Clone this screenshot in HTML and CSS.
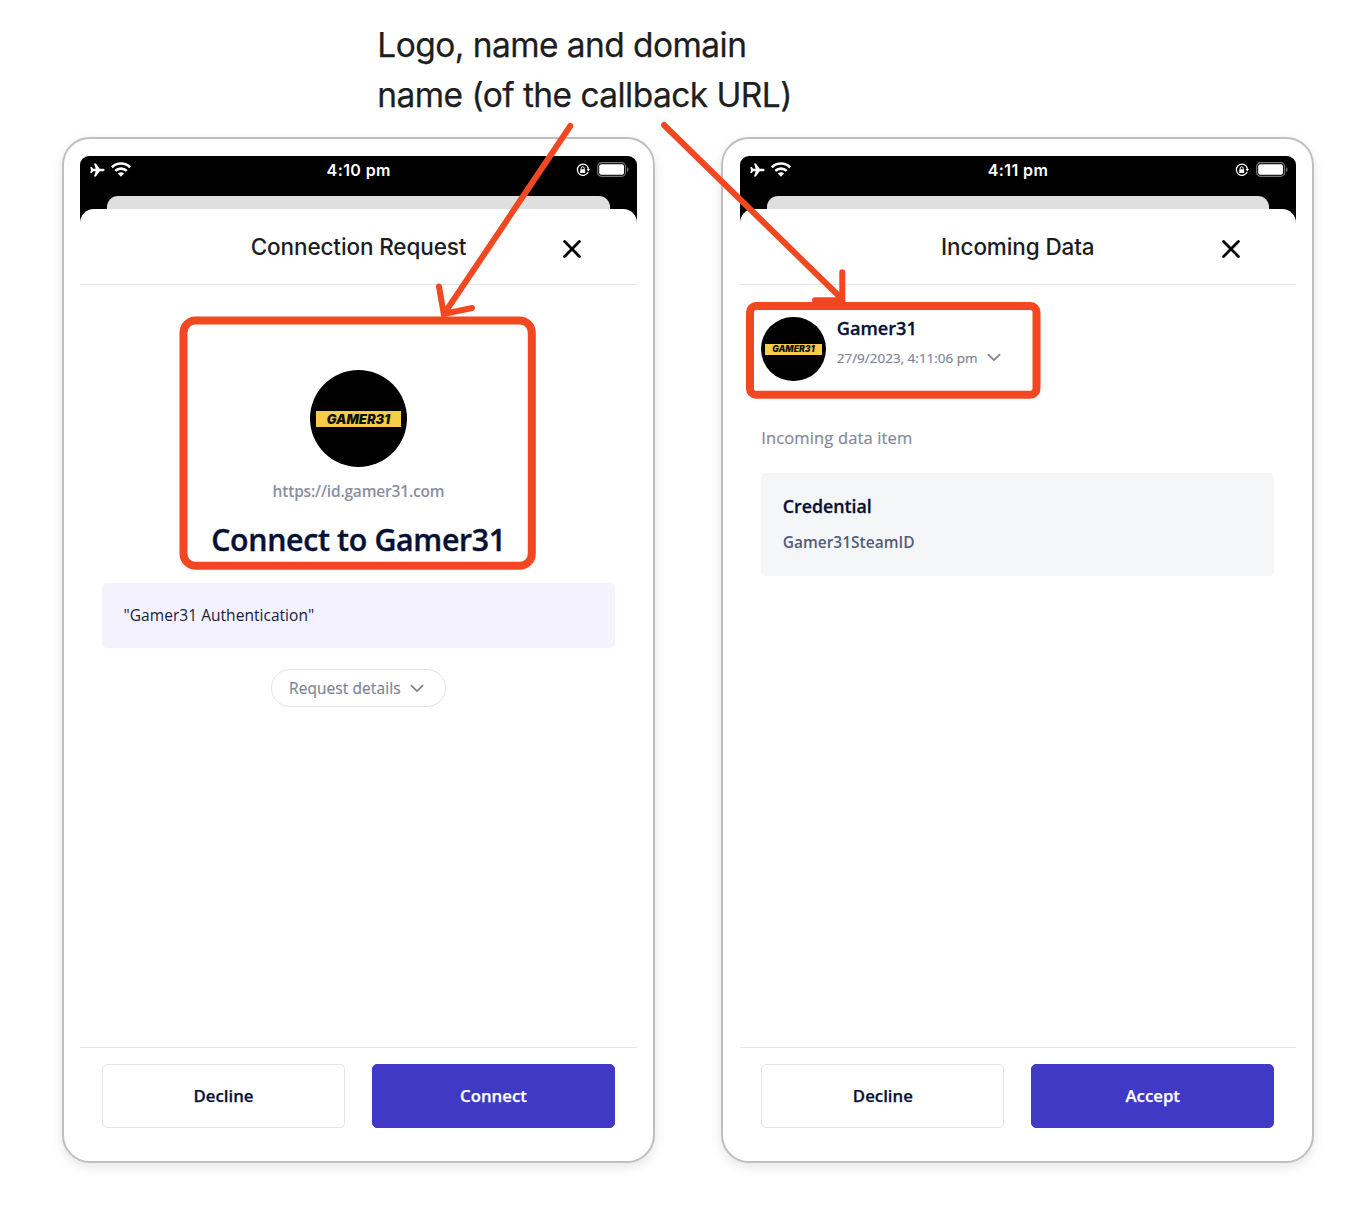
FILE: index.html
```html
<!DOCTYPE html>
<html lang="en">
<head>
<meta charset="utf-8">
<title>Connection and credential requests</title>
<link rel="stylesheet" href="styles.css">
</head>
<body>
<svg class="defs" width="0" height="0" aria-hidden="true">
  <symbol id="plane" viewBox="0 0 15 14"><path fill="#fff" d="M14.6 7c0-.8-.8-1.3-1.8-1.3H9.7L5.9.5H4l1.7 5.2H3.1L1.8 4H.3l.6 3-.6 3h1.5l1.3-1.7h2.6L4 13.5h1.9l3.8-5.2h3.1c1 0 1.8-.5 1.8-1.3z"/></symbol>
  <symbol id="wifi" viewBox="0 0 20 15"><g fill="none" stroke="#fff" stroke-width="2.7"><path d="M.9 5.2a13.1 13.1 0 0 1 18.2 0"/><path d="M4.3 8.9a8.2 8.2 0 0 1 11.4 0"/></g><path fill="#fff" d="M6.8 11.5a4.6 4.6 0 0 1 6.4 0L10 14.8z"/></symbol>
  <symbol id="lock" viewBox="0 0 14 14"><path d="M11.3 3.2A5.6 5.6 0 1 0 12.1 9" fill="none" stroke="#fff" stroke-width="1.3"/><path d="M11.1 3.2a5.6 5.6 0 0 1 1.3 3.1" fill="none" stroke="#fff" stroke-width="1.3"/><path d="M10.6 6h3.4l-1.7 2.5z" fill="#fff"/><rect x="4.2" y="6.3" width="5" height="3.8" rx=".6" fill="#fff"/><path d="M5.2 6.5V5.2a1.5 1.5 0 0 1 3 0v1.3" fill="none" stroke="#fff" stroke-width="1"/></symbol>
  <symbol id="battery" viewBox="0 0 32 15"><rect x=".7" y=".7" width="27.8" height="13.6" rx="3.8" fill="none" stroke="#777" stroke-width="1.2"/><rect x="2.2" y="2.2" width="24.8" height="10.6" rx="2" fill="#fff"/><path d="M30 5.2v4.6c2-.7 2-3.9 0-4.6z" fill="#777"/></symbol>
  <symbol id="close" viewBox="0 0 18 18"><path d="M1.6 1.6l14.8 14.8M16.4 1.6L1.6 16.4" fill="none" stroke="#000" stroke-width="2.8" stroke-linecap="round"/></symbol>
  <symbol id="chevron" viewBox="0 0 14 9"><path d="M1.4 1.6L7 7.2l5.6-5.6" fill="none" stroke="#7f8294" stroke-width="1.8" stroke-linecap="round" stroke-linejoin="round"/></symbol>
</svg>
<main class="board">
  <p class="caption">Logo, name and domain<br>name (of the callback URL)</p>
  <div class="phones">
    <section class="phone">
      <div class="screen">
        <div class="status">
          <span class="signal"><svg class="plane"><use href="#plane"/></svg><svg class="wifi"><use href="#wifi"/></svg></span>
          <span class="clock">4:10 pm</span>
          <span class="power"><svg class="lock"><use href="#lock"/></svg><svg class="battery"><use href="#battery"/></svg></span>
        </div>
        <div class="backdrop"><div class="behind"></div></div>
        <div class="sheet">
          <header class="head"><span>Connection Request</span><svg class="close"><use href="#close"/></svg></header>
          <div class="content centered">
            <div class="logo"><span class="band"><b>GAMER31</b></span></div>
            <p class="url">https://id.gamer31.com</p>
            <h1 class="title">Connect to Gamer31</h1>
            <div class="purpose">"Gamer31 Authentication"</div>
            <div class="details"><span>Request details</span><svg class="chevron"><use href="#chevron"/></svg></div>
          </div>
          <footer class="actions"><div class="btn">Decline</div><div class="btn primary">Connect</div></footer>
        </div>
      </div>
    </section>
    <section class="phone">
      <div class="screen">
        <div class="status">
          <span class="signal"><svg class="plane"><use href="#plane"/></svg><svg class="wifi"><use href="#wifi"/></svg></span>
          <span class="clock">4:11 pm</span>
          <span class="power"><svg class="lock"><use href="#lock"/></svg><svg class="battery"><use href="#battery"/></svg></span>
        </div>
        <div class="backdrop"><div class="behind"></div></div>
        <div class="sheet">
          <header class="head"><span>Incoming Data</span><svg class="close"><use href="#close"/></svg></header>
          <div class="content">
            <div class="sender">
              <div class="logo small"><span class="band"><b>GAMER31</b></span></div>
              <div class="who"><h2 class="name">Gamer31</h2><p class="date"><span>27/9/2023, 4:11:06 pm</span><svg class="chevron"><use href="#chevron"/></svg></p></div>
            </div>
            <p class="label">Incoming data item</p>
            <div class="credential"><h3>Credential</h3><p>Gamer31SteamID</p></div>
          </div>
          <footer class="actions"><div class="btn">Decline</div><div class="btn primary">Accept</div></footer>
        </div>
      </div>
    </section>
  </div>
  <svg class="marks" viewBox="0 0 1368 1212" fill="none" stroke="#f24822">
    <rect x="183.5" y="320.5" width="348.3" height="245.3" rx="12" stroke-width="8"/>
    <rect x="750" y="306" width="286.5" height="88.7" rx="6" stroke-width="8"/>
    <g stroke-width="6" stroke-linecap="round">
      <path d="M570.3 126L444 314M439 286.5L443.8 314L472 308"/>
      <path d="M664 125L842 299M842.3 272.3V300.3H815"/>
    </g>
  </svg>
</main>
</body>
</html>
```
FILE: styles.css
```css
* { box-sizing: border-box; }
body, p, h1, h2, h3 { margin: 0; }
body { background: #fff; font-family: "Open Sans", "Noto Sans", sans-serif; color: #071135; }
svg { display: block; flex: none; }
.defs { position: absolute; }
.board { position: relative; width: 1368px; height: 1212px; overflow: hidden; padding: 20px 0 0 62px; }
.caption { height: 117px; padding-left: 315.3px; font: 400 33.5px/50px Inter, sans-serif; letter-spacing: -.56px; color: #1e1e1e; -webkit-text-stroke: .25px #1e1e1e; white-space: nowrap; }
.phones { display: flex; gap: 66.3px; }
.phone { width: 593px; height: 1026px; border: 2px solid #bfbfbf; border-radius: 28px; padding: 16.6px 16.3px; background: #fff; box-shadow: 0 4px 12px rgba(0,0,0,.1); }
.screen { width: 556.4px; height: 989px; display: flex; flex-direction: column; border-radius: 9px 9px 0 0; background: linear-gradient(#000 66px, #fff 76px); }
.status { height: 40.4px; display: grid; grid-template-columns: 1fr auto 1fr; align-items: start; padding: 0 8px 0 10px; }
.signal, .power { display: flex; align-items: center; height: 27.5px; }
.signal { gap: 6px; }
.power { justify-content: flex-end; gap: 7px; }
.plane { width: 15px; height: 14px; margin-top: 1px; }
.wifi { width: 20px; height: 15px; }
.lock { width: 14px; height: 14px; margin-top: 1px; }
.battery { width: 32px; height: 15px; }
.clock { margin-left: -1.5px; font: 600 16px/28px Inter, sans-serif; letter-spacing: .4px; color: #fff; }
.backdrop { height: 13px; padding: 0 27px; }
.behind { height: 13px; background: #dfdfdf; border-radius: 11px 11px 0 0; }
.sheet { flex: 1; min-height: 0; display: flex; flex-direction: column; background: #fff; border-radius: 14px 14px 0 0; }
.head { height: 76px; display: grid; grid-template-columns: 1fr auto 1fr; align-items: center; border-bottom: 1.5px solid #e1e1e6; font: 500 22.5px/30px Inter, sans-serif; letter-spacing: -.12px; color: #1c1c1e; white-space: nowrap; }
.head span { grid-column: 2; padding-top: 2px; }
.close { width: 18px; height: 18px; justify-self: end; margin: 5px 56px 0 0; }
.content { flex: 1; padding: 0 21.6px; }
.centered { display: flex; flex-direction: column; align-items: center; padding-top: 85.4px; }
.logo { width: 97px; height: 97px; border-radius: 50%; background: #000; display: flex; align-items: center; justify-content: center; flex: none; }
.band { width: 85px; height: 16px; background: #f8cc46; display: flex; align-items: center; justify-content: center; }
.band b { font: italic 900 13px/16px Inter, sans-serif; color: #11110b; letter-spacing: 0; }
.small { width: 64.5px; height: 64.5px; }
.small .band { width: 57px; height: 11px; }
.small b { font-size: 8.7px; line-height: 12px; }
.url { height: 24px; margin-top: 12px; font-size: 15.5px; line-height: 24px; font-weight: 600; letter-spacing: -.18px; color: #8b8e9f; white-space: nowrap; }
.title { height: 44px; margin-top: 14.8px; font-size: 30.3px; line-height: 44px; font-weight: 600; letter-spacing: -.33px; -webkit-text-stroke: .4px #071135; white-space: nowrap; }
.purpose { align-self: stretch; height: 65px; margin-top: 20.7px; border-radius: 5px; background: #f4f2fe; padding-left: 21.7px; font-size: 15.5px; line-height: 65px; letter-spacing: .04px; color: #17203f; }
.details { width: 175px; height: 38px; margin-top: 21.4px; border: 1.5px solid #e3e3ec; border-radius: 19px; padding: 0 20.5px 0 17px; display: flex; align-items: center; justify-content: space-between; font-size: 15.5px; letter-spacing: .08px; color: #7f8294; -webkit-text-stroke: .2px #7f8294; white-space: nowrap; }
.details span { margin-top: -1px; }
.chevron { width: 14px; height: 9px; }
.actions { height: 98px; display: flex; justify-content: space-between; border-top: 1.5px solid #e5e5ee; padding: 16px 21.6px 0; }
.btn { width: 243.3px; height: 64.5px; border: 1.5px solid #e3e3ec; border-radius: 5px; text-align: center; font-size: 16.8px; line-height: 62px; font-weight: 600; -webkit-text-stroke: .25px currentColor; }
.primary { background: #3f39c5; border-color: #3f39c5; color: #fff; }
.sender { display: flex; gap: 11px; padding-top: 31.9px; }
.name { height: 26px; margin-top: -2px; font-size: 18.2px; line-height: 26px; font-weight: 600; -webkit-text-stroke: .3px #071135; }
.date { display: flex; align-items: center; gap: 9px; height: 24px; margin-top: 5px; font-size: 13.5px; color: #7f8294; -webkit-text-stroke: .2px #7f8294; white-space: nowrap; }
.label { height: 26px; margin-top: 43.4px; font-size: 16.5px; line-height: 26px; letter-spacing: .15px; color: #85889a; -webkit-text-stroke: .2px #85889a; }
.credential { height: 103px; margin-top: 22px; border-radius: 5px; background: #f5f6f8; padding: 20px 21.5px; }
.credential h3 { height: 26px; font-size: 17.8px; line-height: 26px; font-weight: 600; -webkit-text-stroke: .3px #071135; }
.credential p { height: 24px; margin-top: 11px; font-size: 15.5px; line-height: 24px; font-weight: 600; color: #555b78; }
.marks { position: absolute; left: 0; top: 0; width: 1368px; height: 1212px; pointer-events: none; }
```
